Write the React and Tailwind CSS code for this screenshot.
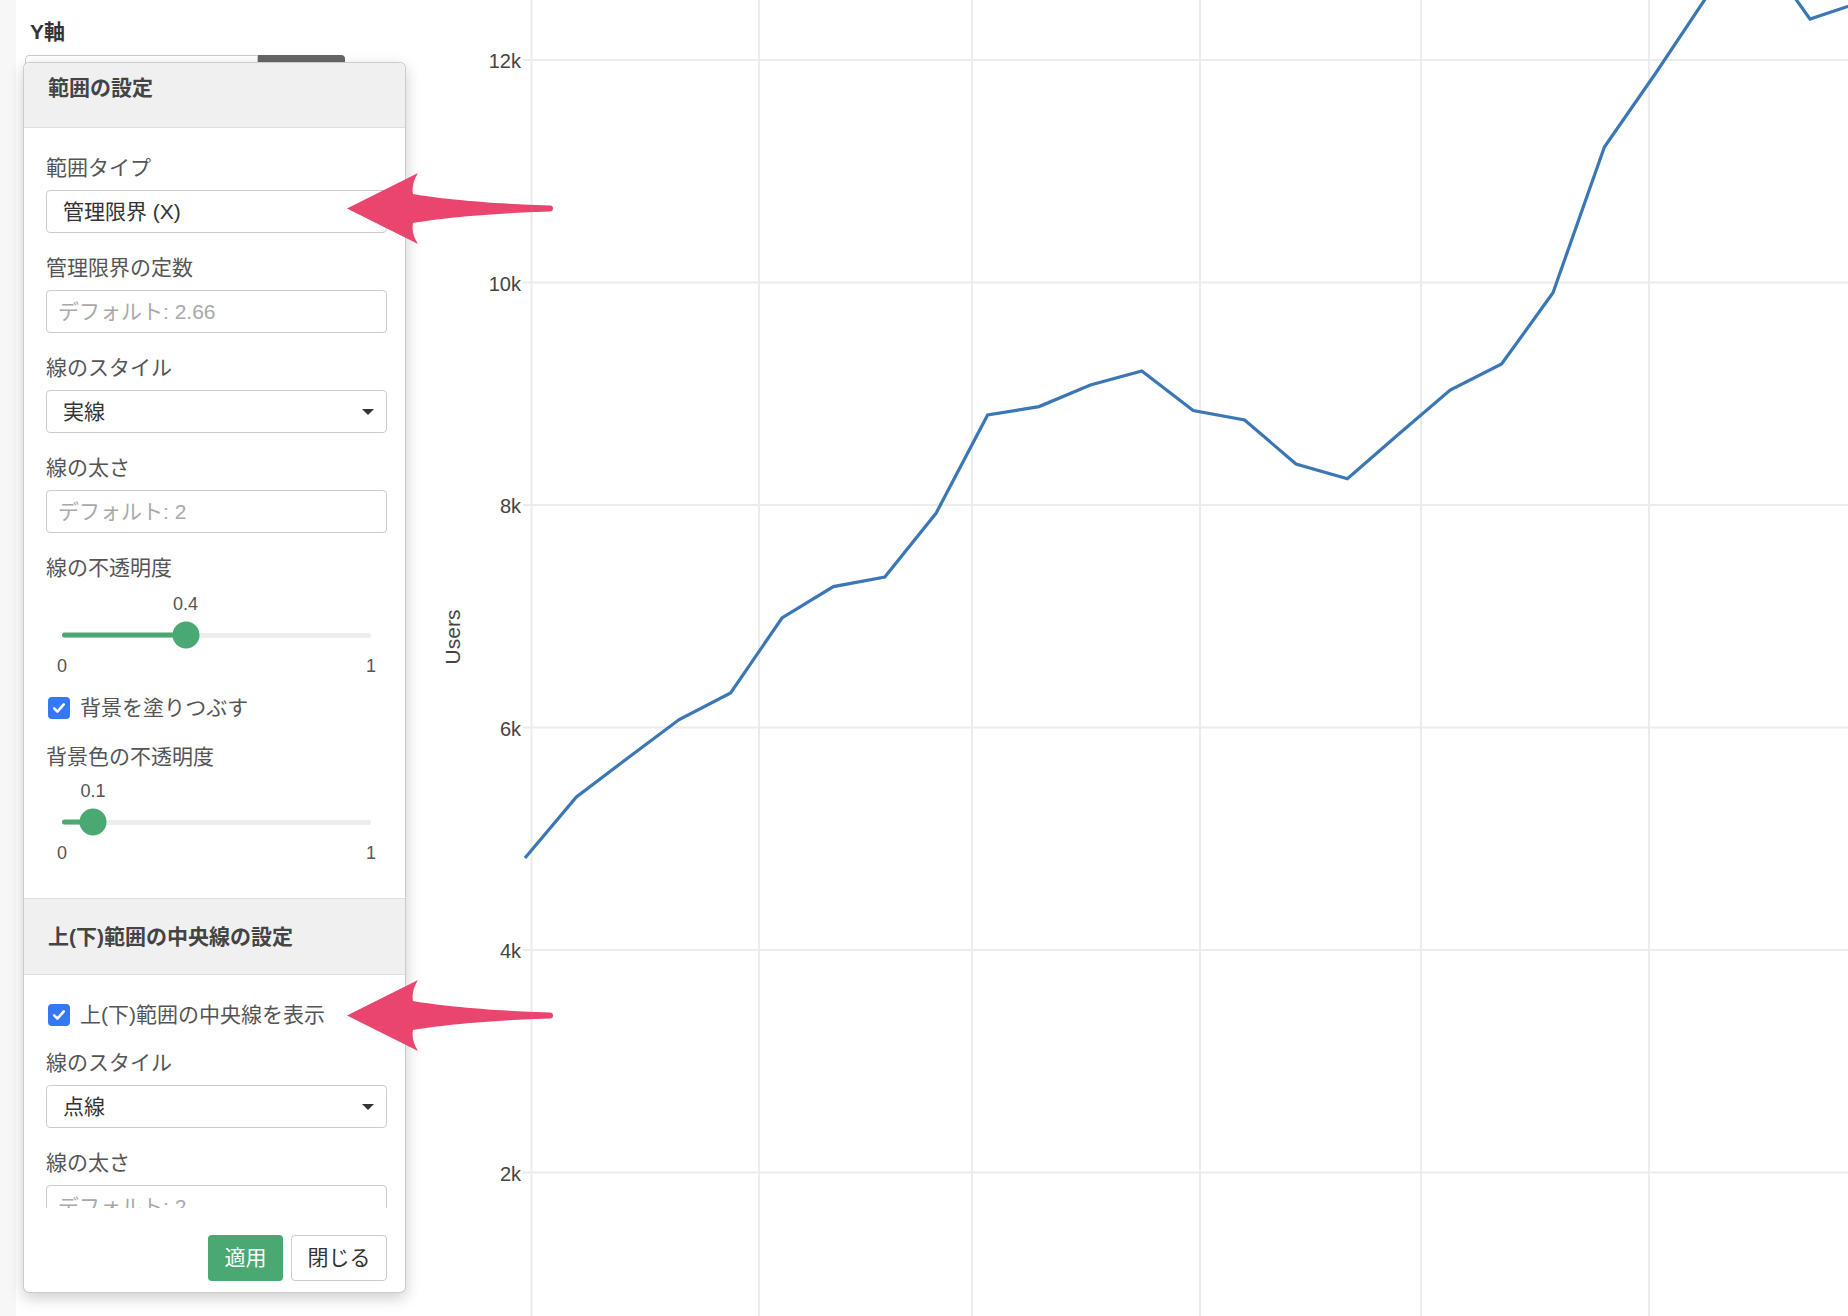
import React from "react";

// chart points, page coordinates
const points = [
  [525, 858], [576.4, 797], [627.8, 758], [679.2, 719.5], [730.6, 693],
  [782, 618], [833.4, 586.6], [884.8, 577], [936.2, 513], [987.6, 415],
  [1039, 406.6], [1090.4, 385], [1141.8, 371], [1193.2, 410.5], [1244.6, 420],
  [1296, 464], [1347.4, 478.7], [1398.8, 434], [1450.2, 390], [1501.6, 364],
  [1553, 292.7], [1604.4, 147], [1655.8, 73], [1707.2, -4], [1758.6, -53],
  [1810, 19], [1861.4, 2],
];

const yTicks = [
  { label: "12k", y: 60 },
  { label: "10k", y: 282.5 },
  { label: "8k", y: 505 },
  { label: "6k", y: 727.5 },
  { label: "4k", y: 950 },
  { label: "2k", y: 1172.5 },
];

const xGrid = [531.5, 759, 972, 1200, 1421, 1649];

function Chart() {
  return (
    <svg width="1441" height="1316" viewBox="407 0 1441 1316" className="block">
      {xGrid.map((x) => (
        <line key={x} x1={x} y1="0" x2={x} y2="1316" stroke="#ececec" strokeWidth="2" />
      ))}
      {yTicks.map((t) => (
        <g key={t.label}>
          <line x1="523" y1={t.y} x2="1848" y2={t.y} stroke="#ececec" strokeWidth="2" />
          <text x="521" y={t.y + 1} textAnchor="end" dominantBaseline="central" fontSize="20" fill="#444">
            {t.label}
          </text>
        </g>
      ))}
      <text
        x="452"
        y="637"
        transform="rotate(-90 452 637)"
        textAnchor="middle"
        dominantBaseline="central"
        fontSize="21"
        fill="#444"
      >
        Users
      </text>
      <polyline
        points={points.map((p) => p.join(",")).join(" ")}
        fill="none"
        stroke="#3a77b4"
        strokeWidth="3.2"
      />
    </svg>
  );
}

function Label({ children, className = "" }) {
  return (
    <div className={"h-[24px] leading-[24px] text-[21px] text-[#555] whitespace-nowrap " + className}>
      {children}
    </div>
  );
}

function TextInput({ placeholder }) {
  return (
    <input
      readOnly
      placeholder={placeholder}
      className="block w-full h-[43px] border border-[#ccc] rounded-[4px] px-[11px] text-[21px] text-[#333] placeholder:text-[#a9a9a9] outline-none bg-white"
    />
  );
}

function SelectBox({ value, caret = true }) {
  return (
    <div className="h-[43px] border border-[#ccc] rounded-[4px] pl-[16px] pr-[12px] flex items-center justify-between text-[21px] text-[#333] bg-white">
      <span>{value}</span>
      {caret && (
        <svg width="12" height="6" viewBox="0 0 12 6">
          <path d="M0 0 L12 0 L6 6 Z" fill="#333" />
        </svg>
      )}
    </div>
  );
}

function Field({ label, children }) {
  return (
    <div className="mb-[23px]">
      <Label className="mb-[10px]">{label}</Label>
      {children}
    </div>
  );
}

function Checkbox({ label }) {
  return (
    <div className="h-[24px] flex items-center gap-[10px] pl-[2px]">
      <span className="w-[22px] h-[22px] rounded-[4px] bg-[#3478f6] flex items-center justify-center shrink-0">
        <svg width="16" height="16" viewBox="0 0 16 16">
          <path d="M3.2 8.4 L6.4 11.6 L12.8 4.4" fill="none" stroke="#fff" strokeWidth="2.6" strokeLinecap="round" strokeLinejoin="round" />
        </svg>
      </span>
      <span className="text-[21px] leading-[24px] text-[#555] whitespace-nowrap">{label}</span>
    </div>
  );
}

function Slider({ value }) {
  const pct = `${value * 100}%`;
  return (
    <div className="px-[16px]">
      <div className="relative h-[20px]">
        <span
          className="absolute top-0 -translate-x-1/2 text-[18px] leading-[20px] text-[#555]"
          style={{ left: pct }}
        >
          {value}
        </span>
      </div>
      <div className="relative h-[42px] flex items-center">
        <div className="w-full h-[5px] rounded-full bg-[#ededed]" />
        <div
          className="absolute left-0 top-1/2 -translate-y-1/2 h-[5px] rounded-full bg-[#4aa873]"
          style={{ width: pct }}
        />
        <div
          className="absolute top-1/2 -translate-y-1/2 -translate-x-1/2 w-[27px] h-[27px] rounded-full bg-[#4aa873]"
          style={{ left: pct }}
        />
      </div>
      <div className="-mx-[5px] h-[20px] flex justify-between text-[18px] leading-[20px] text-[#555]">
        <span>0</span>
        <span>1</span>
      </div>
    </div>
  );
}

function Arrow({ top }) {
  return (
    <svg
      className="absolute left-[345px] z-20"
      style={{ top }}
      width="212"
      height="78"
      viewBox="0 0 212 78"
    >
      <path
        d="M2 38.5 L73 3 Q66 14 68 24 C95 29 150 34 205 35.5 A3 3 0 0 1 205 41.5 C150 43 95 48 68 53 Q66 63 73 74 Z"
        fill="#e9456f"
      />
    </svg>
  );
}

function RangePopover() {
  return (
    <div className="absolute left-[23px] top-[62px] w-[383px] h-[1231px] z-10 bg-white border border-[rgba(0,0,0,0.2)] rounded-[6px] shadow-[0_5px_15px_rgba(0,0,0,0.2)] flex flex-col">
      {/* Header */}
      <div className="h-[65px] shrink-0 bg-[#f0f0f0] border-b border-[#dedede] rounded-t-[6px] pl-[24px] pt-[13px] text-[21px] leading-[24px] font-bold text-[#444]">
        範囲の設定
      </div>

      {/* Scroll area */}
      <div className="h-[1080px] shrink-0 overflow-hidden">
        <div className="pl-[22px] pr-[18px] pt-[28px] pb-[35px]">
          <Field label="範囲タイプ">
            <SelectBox value="管理限界 (X)" caret={false} />
          </Field>
          <Field label="管理限界の定数">
            <TextInput placeholder="デフォルト: 2.66" />
          </Field>
          <Field label="線のスタイル">
            <SelectBox value="実線" />
          </Field>
          <Field label="線の太さ">
            <TextInput placeholder="デフォルト: 2" />
          </Field>

          <Label>線の不透明度</Label>
          <div className="mt-[14px]">
            <Slider value={0.4} />
          </div>

          <div className="mt-[20px]">
            <Checkbox label="背景を塗りつぶす" />
          </div>

          <Label className="mt-[25px]">背景色の不透明度</Label>
          <div className="mt-[12px]">
            <Slider value={0.1} />
          </div>
        </div>

        <div className="h-[77px] bg-[#f0f0f0] border-y border-[#dedede] pl-[24px] flex items-center text-[21px] font-bold text-[#444] whitespace-nowrap">
          上(下)範囲の中央線の設定
        </div>

        <div className="pl-[22px] pr-[18px] pt-[28px]">
          <Checkbox label="上(下)範囲の中央線を表示" />
          <div className="mt-[24px]">
            <Field label="線のスタイル">
              <SelectBox value="点線" />
            </Field>
          </div>
          <Field label="線の太さ">
            <TextInput placeholder="デフォルト: 2" />
          </Field>
        </div>
      </div>

      {/* Footer */}
      <div className="flex justify-end gap-[8px] pt-[27px] pb-[11px] pr-[18px]">
        <button className="w-[75px] h-[46px] rounded-[4px] bg-[#4aa873] text-white text-[21px]">
          適用
        </button>
        <button className="w-[96px] h-[46px] rounded-[4px] bg-white border border-[#ccc] text-[#333] text-[21px]">
          閉じる
        </button>
      </div>
    </div>
  );
}

export default function App() {
  return (
    <div className="relative w-[1848px] h-[1316px] overflow-hidden bg-white flex font-['Liberation_Sans','Noto_Sans_CJK_JP',sans-serif]">
      <div className="w-[16px] shrink-0 bg-[#f7f7f7]" />

      {/* Sidebar (behind popover) */}
      <div className="w-[391px] shrink-0 pt-[20px] pl-[9px]">
        <div className="ml-[5px] h-[24px] leading-[24px] text-[21px] font-bold text-[#333]">Y軸</div>
        <div className="mt-[11px] w-[320px] h-[43px] flex">
          <div className="flex-1 border border-[#ccc] rounded-l-[4px] bg-white" />
          <div className="w-[87px] bg-[#666] rounded-r-[4px]" />
        </div>
      </div>

      {/* Chart */}
      <div className="flex-1">
        <Chart />
      </div>

      <RangePopover />
      <Arrow top={170} />
      <Arrow top={977} />
    </div>
  );
}
